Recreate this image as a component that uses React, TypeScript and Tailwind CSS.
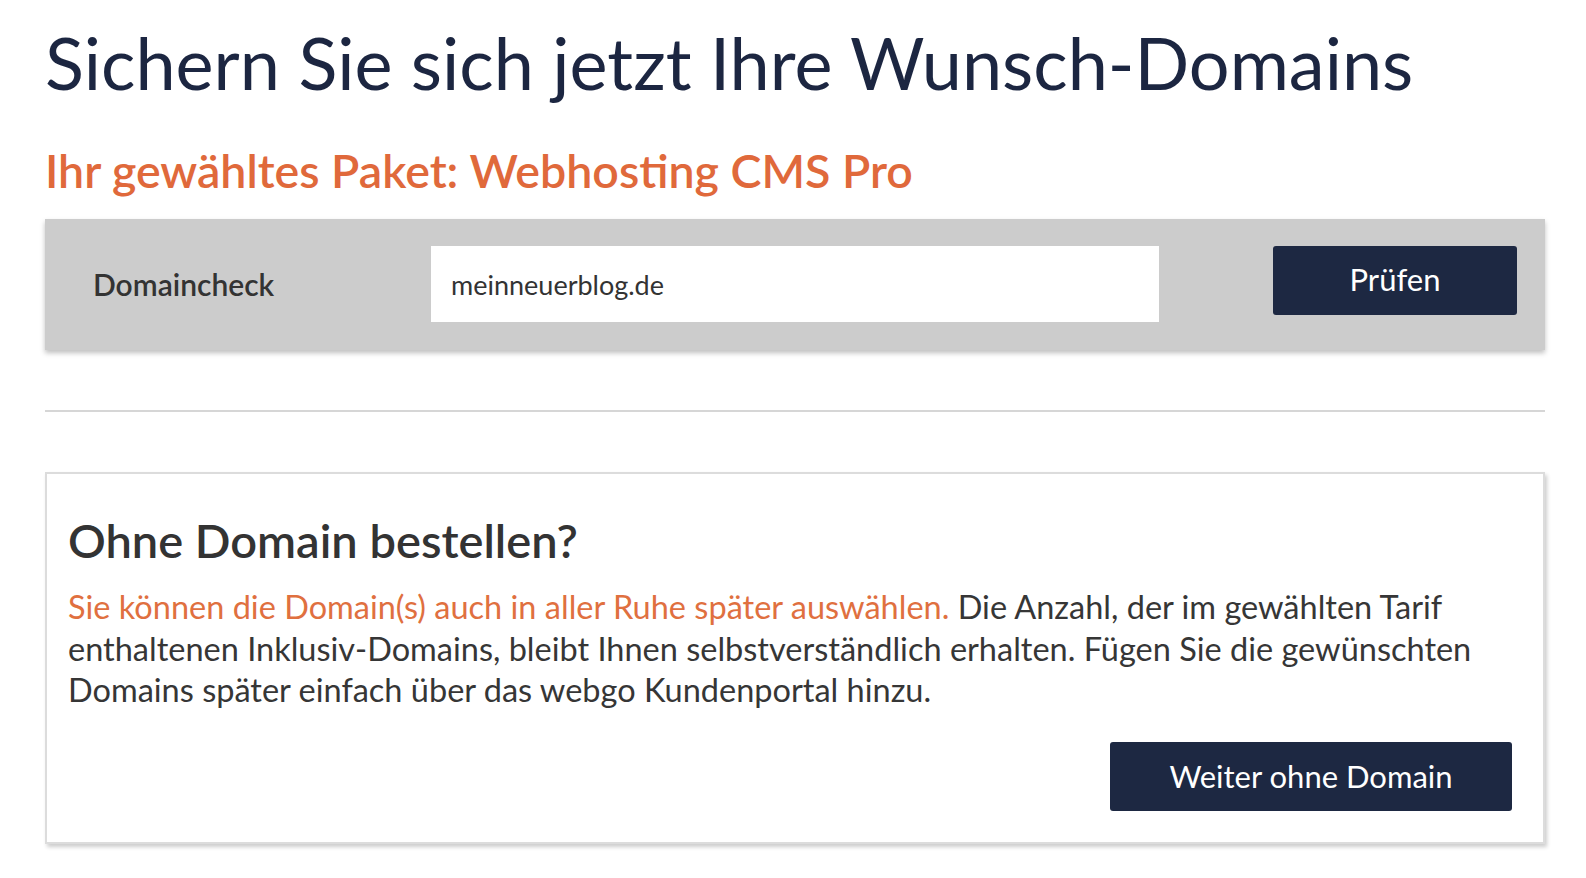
export default function App() {
  return (
    <div className="min-h-screen bg-white font-['Lato',sans-serif]">
      <div className="ml-[45px] w-[1500px] pt-[25px]">
        <h1 className="text-[72px] leading-[74px] font-normal text-[#1c2641]">
          Sichern Sie sich jetzt Ihre Wunsch-Domains
        </h1>
        <h2 className="mt-[46px] text-[46.5px] leading-[50px] font-semibold text-[#e0693b]">
          Ihr gewähltes Paket: Webhosting CMS Pro
        </h2>

        <div className="mt-[24px] h-[131px] bg-[#cccccc] shadow-[0_3px_5px_rgba(0,0,0,0.25)] flex items-start pt-[27px] pl-[48px] pr-[28px]">
          <div className="w-[338px] h-[76px] flex items-center text-[30px] font-semibold text-[#333333]">
            Domaincheck
          </div>
          <input
            className="w-[728px] h-[76px] bg-white px-[20px] text-[27px] text-[#333333] outline-none"
            defaultValue="meinneuerblog.de"
          />
          <button className="ml-auto w-[244px] h-[69px] pb-[3px] rounded-[3px] bg-[#1d2842] text-white text-[31px]">
            Prüfen
          </button>
        </div>

        <div className="mt-[60px] h-[2px] bg-[#d6d6d6]" />

        <div className="mt-[60px] h-[372px] border-2 border-[#dcdcdc] bg-white shadow-[2px_3px_4px_rgba(0,0,0,0.2)] pl-[21px] pr-[31px] pt-[41px]">
          <h3 className="text-[47px] leading-[50px] font-semibold text-[#333333]">
            Ohne Domain bestellen?
          </h3>
          <p className="mt-[21px] text-[32.5px] leading-[41.5px] text-[#363636]">
            <span className="text-[#e0703f]">
              Sie können die Domain(s) auch in aller Ruhe später auswählen.
            </span>{' '}
            Die Anzahl, der im gewählten Tarif
            <br />
            enthaltenen Inklusiv-Domains, bleibt Ihnen selbstverständlich erhalten. Fügen Sie die gewünschten
            <br />
            Domains später einfach über das webgo Kundenportal hinzu.
          </p>
          <div className="mt-[31px] flex justify-end">
            <button className="w-[402px] h-[69px] rounded-[3px] bg-[#1d2842] text-white text-[31px]">
              Weiter ohne Domain
            </button>
          </div>
        </div>
      </div>
    </div>
  );
}
